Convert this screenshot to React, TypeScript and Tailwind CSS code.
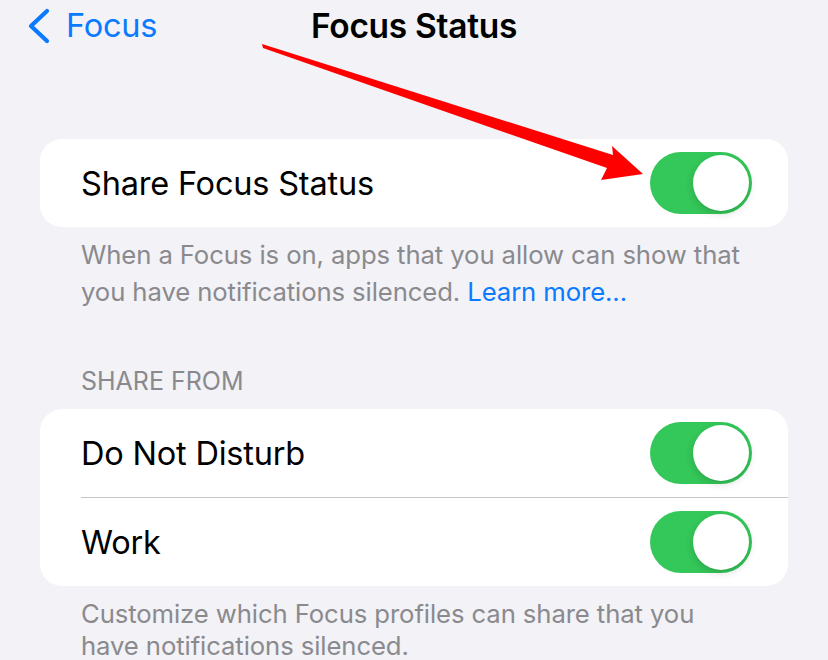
import React from 'react';

const Toggle: React.FC = () => (
  <div className="w-[102px] h-[62px] rounded-full bg-[#34c759] p-[3px] flex justify-end shrink-0">
    <div className="w-[56px] h-[56px] rounded-full bg-white shadow-[0_3px_8px_rgba(0,0,0,0.15),0_1px_1px_rgba(0,0,0,0.06)]" />
  </div>
);

const Row: React.FC<{ label: string }> = ({ label }) => (
  <div className="h-[88px] flex items-center justify-between pl-[41px] pr-[36px]">
    <span className="text-[32.5px] text-black tracking-[-0.2px] mt-[2px]">{label}</span>
    <Toggle />
  </div>
);

export default function App() {
  return (
    <div
      className="relative w-[828px] h-[660px] overflow-hidden bg-[#f2f2f7]"
      style={{ fontFamily: 'Inter, "Noto Sans", sans-serif' }}
    >
      {/* nav bar */}
      <header className="grid grid-cols-[1fr_auto_1fr] items-center h-[52px]">
        <div className="flex items-center pl-[26px] text-[#0a7aff]">
          <svg width="26" height="38" viewBox="0 0 26 38" fill="none">
            <path d="M21 4 L5 19 L21 34" stroke="currentColor" strokeWidth="4.2" strokeLinecap="round" strokeLinejoin="round" />
          </svg>
          <span className="ml-[14px] text-[32.5px] tracking-[-0.2px]">Focus</span>
        </div>
        <h1 className="text-[33.5px] font-semibold text-black tracking-[-0.3px]">Focus Status</h1>
        <div />
      </header>

      <main className="mt-[87px]">
        <section className="mx-[40px] bg-white rounded-[22px]">
          <Row label="Share Focus Status" />
        </section>
        <p className="mt-[9px] pl-[81px] pr-[50px] text-[25.7px] leading-[37px] text-[#8a8a8e] tracking-[-0.1px]">
          When a Focus is on, apps that you allow can show that you have notifications silenced.{' '}
          <span className="text-[#0a7aff]">Learn more...</span>
        </p>

        <h2 className="mt-[56px] px-[81px] text-[25px] leading-[30px] text-[#8a8a8e] uppercase">Share From</h2>
        <section className="mt-[13px] mx-[40px] bg-white rounded-[22px]">
          <Row label="Do Not Disturb" />
          <div className="ml-[41px] h-px bg-[#c6c6c8]" />
          <Row label="Work" />
        </section>
        <p className="mt-[12px] pl-[81px] pr-[90px] text-[25.7px] leading-[32px] text-[#8a8a8e] tracking-[-0.1px]">
          Customize which Focus profiles can share that you have notifications silenced.
        </p>
      </main>

      {/* red annotation arrow */}
      <svg className="absolute left-0 top-0 pointer-events-none" width="828" height="660" viewBox="0 0 828 660">
        <polygon
          points="262,44 613,155 612,146 643,174 601,180 607,168 263,48"
          fill="#ff0000"
        />
      </svg>
    </div>
  );
}
